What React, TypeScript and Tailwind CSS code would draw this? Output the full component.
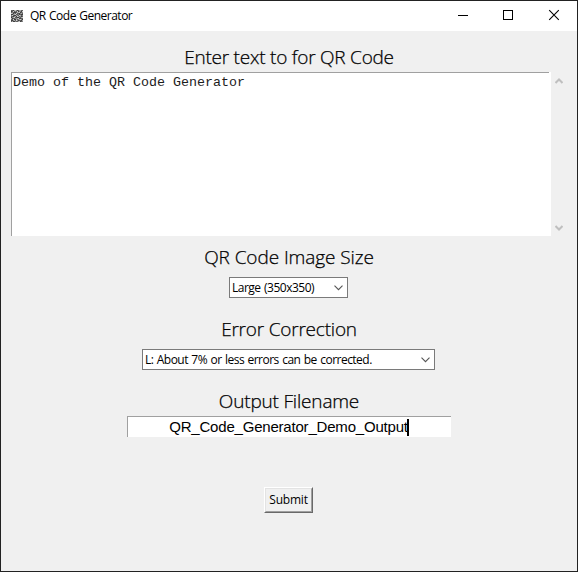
import React from "react";

const SIZE = 12;
// Grey values of the small pixelated code shown in the title bar.
const rows = [
  "443675346644", "347454735537", "454334667345", "763547443564",
  "335674453433", "574336547645", "443563764534", "356744335467",
  "634455673344", "447336456753", "335647534436", "463354467345",
];
const shades: Record<string, string> = {
  "3": "#404040", "4": "#606060", "5": "#858585", "6": "#a8a8a8", "7": "#cccccc",
};

function CodeIcon() {
  return (
    <svg className="h-3 w-3" viewBox={`0 0 ${SIZE} ${SIZE}`} shapeRendering="crispEdges">
      {rows.flatMap((row, y) =>
        row.split("").map((c, x) => <rect key={`${x}-${y}`} x={x} y={y} width="1" height="1" fill={shades[c]} />)
      )}
    </svg>
  );
}

function Label({ children, className }: { children: React.ReactNode; className: string }) {
  return (
    <div className={`h-[28px] text-center text-[19px] leading-[26px] font-light whitespace-nowrap [-webkit-text-stroke:0.25px_black] ${className}`}>{children}</div>
  );
}

function Combo({ children, className, textClass }: { children: React.ReactNode; className: string; textClass: string }) {
  return (
    <div className={`mr-px flex h-[21px] items-center justify-between border border-[#7a7a7a] bg-white pr-1 pl-0.5 ${className}`}>
      <span className={`text-[12px] leading-[19px] whitespace-nowrap ${textClass}`}>{children}</span>
      <svg className="h-[6px] w-[9px]" viewBox="0 0 9 6" fill="none" stroke="#555555" strokeWidth="1.1">
        <path d="M0.5 0.7 4.5 4.7 8.5 0.7" />
      </svg>
    </div>
  );
}

export default function App() {
  return (
    <div className="h-[572px] w-[578px] overflow-hidden border border-[#222222] bg-[#f0f0f0] font-['Open_Sans','Noto_Sans',sans-serif] text-black">
      <header className="flex h-[30px] items-center bg-white pl-[10px]">
        <CodeIcon />
        <span className="ml-[7px] text-[12px] leading-[30px] tracking-[-0.5px] [word-spacing:0.7px]">QR Code Generator</span>
        <svg className="ml-auto h-[30px] w-[138px]" viewBox="0 0 138 30" fill="none" stroke="black">
          <path d="M19 14.5h10M64.5 9.5h9v9h-9z" shapeRendering="crispEdges" />
          <path d="M110.2 9.2l9.6 9.6M119.8 9.2l-9.6 9.6" strokeWidth="1.1" />
        </svg>
      </header>
      <main className="flex flex-col items-center pt-[13px]">
        <Label className="tracking-[-0.23px]">Enter text to for QR Code</Label>
        <div className="flex h-[164px] w-[556px]">
          <div className="w-[540px] border-l border-[#a0a0a0] bg-white font-['Liberation_Mono',monospace] text-[13.33px] leading-[18px] text-[#1c1c1c]">
            <div className="mr-[2px] border-t border-[#a0a0a0] pt-[1px] pl-[1px]">Demo of the QR Code Generator</div>
          </div>
          <div className="flex w-[15px] flex-col items-center justify-between pt-[6px] pb-[5px]">
            <svg className="h-[6px] w-[8px]" viewBox="0 0 8 6" fill="none" stroke="#bfbfbf" strokeWidth="2"><path d="M.5 5 4 1.5 7.5 5" /></svg>
            <svg className="h-[6px] w-[8px]" viewBox="0 0 8 6" fill="none" stroke="#bfbfbf" strokeWidth="2"><path d="M.5 1 4 4.5 7.5 1" /></svg>
          </div>
        </div>
        <Label className="mt-[8px] tracking-[-0.08px]">QR Code Image Size</Label>
        <Combo className="mt-[5px] w-[119px]" textClass="tracking-[-0.5px] [word-spacing:0.8px]">Large (350x350)</Combo>
        <Label className="mt-[18px] tracking-[-0.2px]">Error Correction</Label>
        <Combo className="mt-[5px] w-[293px]" textClass="tracking-[-0.52px] [word-spacing:0.8px]">L: About 7% or less errors can be corrected.</Combo>
        <Label className="mt-[18px] tracking-[-0.18px]">Output Filename</Label>
        <div className="flex h-[21px] w-[324px] items-center justify-center border-t border-l border-[#a0a0a0] bg-white font-['Liberation_Sans',sans-serif] text-[15px] leading-5">
          <span className="whitespace-nowrap tracking-[-0.2px]">QR_Code_Generator_Demo_Output</span>
          <span className="-ml-px mr-px h-[17px] w-[2px] bg-black" />
        </div>
        <button className="mt-[50px] mr-px h-[26px] w-[49px] border border-t-white border-r-[#696969] border-b-[#696969] border-l-white">
          <span className="flex h-full w-full items-center justify-center border border-t-[#e3e3e3] border-r-[#a0a0a0] border-b-[#a0a0a0] border-l-[#e3e3e3] text-[12px] leading-[20px] tracking-[-0.2px]">Submit</span>
        </button>
      </main>
    </div>
  );
}
